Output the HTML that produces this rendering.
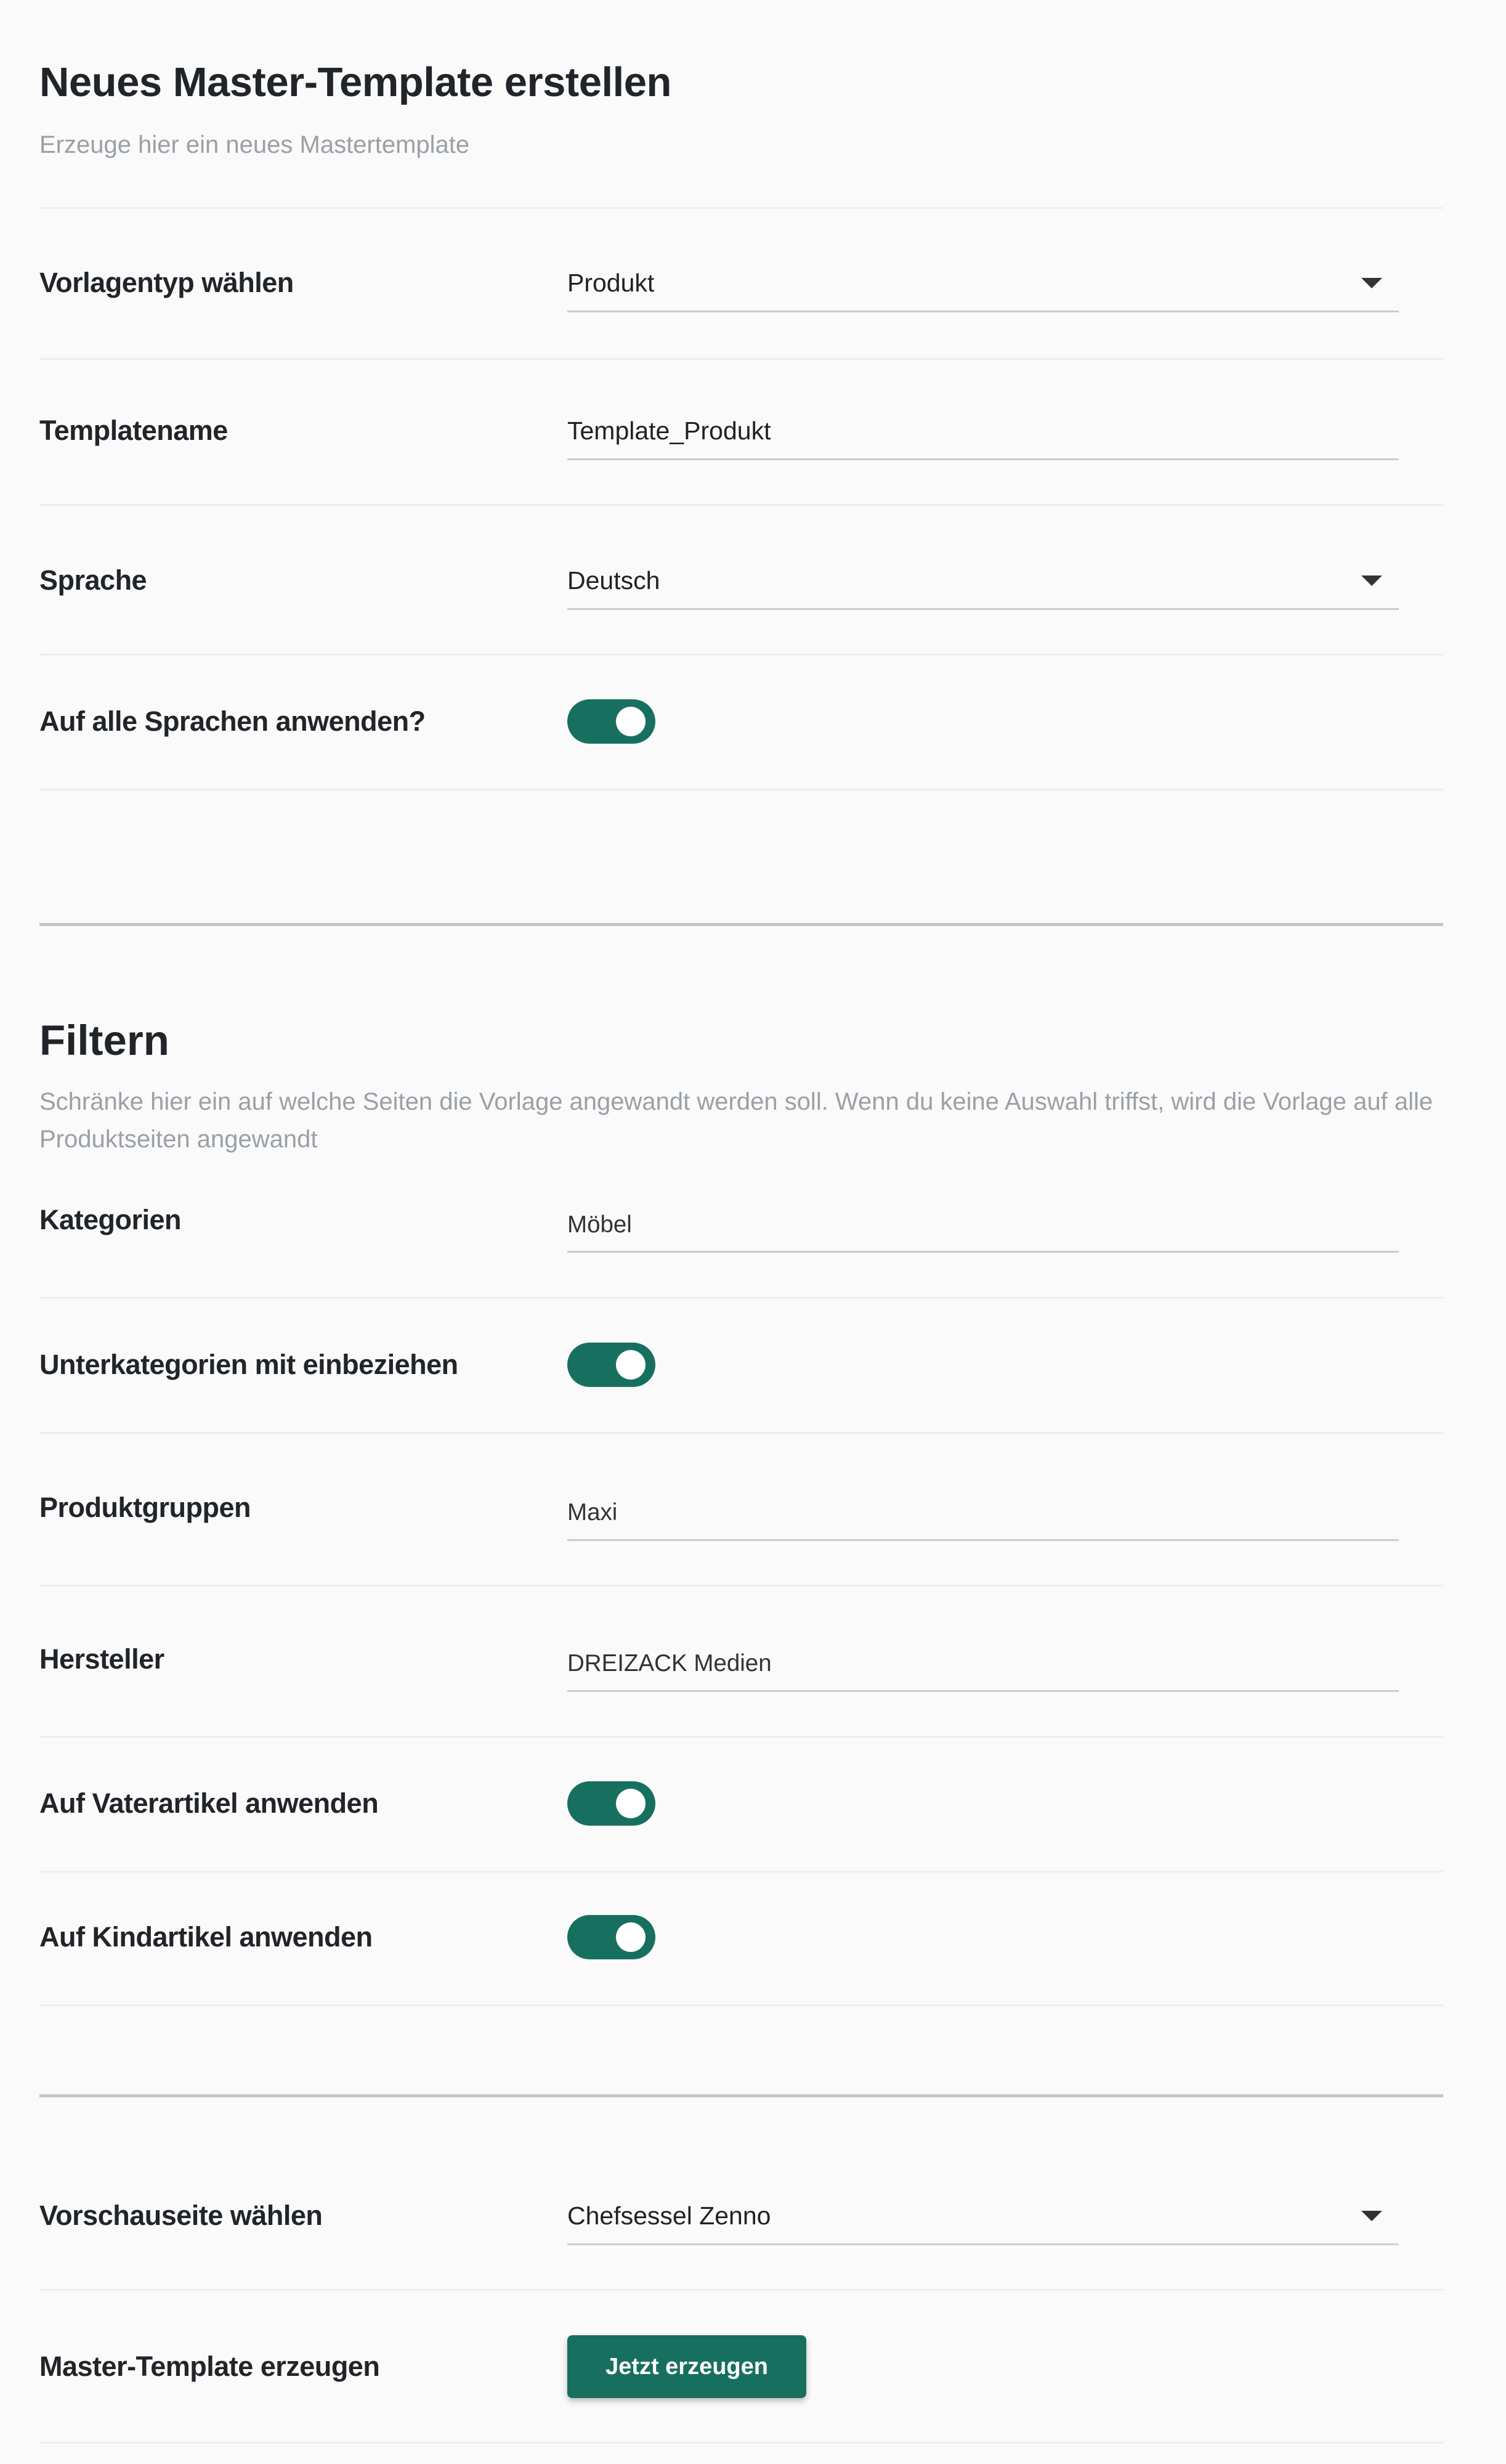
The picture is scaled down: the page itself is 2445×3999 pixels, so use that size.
<!DOCTYPE html>
<html><head><meta charset="utf-8"><style>
html,body{margin:0;padding:0;background:#fafafa;}
body{width:2445px;height:3999px;position:relative;overflow:hidden;font-family:"Liberation Sans",sans-serif;color:#212529;}
.a{position:absolute;white-space:nowrap;}
.lbl{position:absolute;left:64px;font-weight:bold;font-size:45px;line-height:50px;transform:translateY(-25px);letter-spacing:-0.5px;}
.hr{position:absolute;left:64px;width:2279px;height:3px;background:#eeeeee;}
.thk{position:absolute;left:64px;width:2279px;height:5px;background:#c4c6c6;}
.ul{position:absolute;left:921px;width:1350px;height:3px;background:#c8cccb;}
.inp{position:absolute;left:921px;font-size:41px;line-height:50px;transform:translateY(-25px);color:#222;}
.inp2{position:absolute;left:921px;font-size:38.5px;line-height:50px;transform:translateY(-25px);color:#333;}
.arr{position:absolute;left:2210px;width:0;height:0;border-left:17px solid transparent;border-right:17px solid transparent;border-top:17px solid #333;}
.tg{position:absolute;left:921px;width:143px;height:72px;border-radius:36px;background:#17705f;transform:translateY(-36px);}
.tg::after{content:"";position:absolute;right:16px;top:12px;width:48px;height:48px;border-radius:50%;background:#fff;}
</style></head><body>
<div class="a" style="left:64px;top:94px;font-size:67px;font-weight:bold;line-height:80px;letter-spacing:-0.5px">Neues Master-Template erstellen</div>
<div class="a" style="left:64px;top:211px;font-size:40px;line-height:48px;color:#9aa0a6">Erzeuge hier ein neues Mastertemplate</div>
<div class="hr" style="top:336px"></div>

<div class="lbl" style="top:459px">Vorlagentyp wählen</div>
<div class="inp" style="top:459px">Produkt</div>
<div class="arr" style="top:451px"></div>
<div class="ul" style="top:504px"></div>
<div class="hr" style="top:581px"></div>

<div class="lbl" style="top:699px">Templatename</div>
<div class="inp" style="top:699px">Template_Produkt</div>
<div class="ul" style="top:744px"></div>
<div class="hr" style="top:818px"></div>

<div class="lbl" style="top:942px">Sprache</div>
<div class="inp" style="top:942px">Deutsch</div>
<div class="arr" style="top:934px"></div>
<div class="ul" style="top:987px"></div>
<div class="hr" style="top:1061px"></div>

<div class="lbl" style="top:1171px">Auf alle Sprachen anwenden?</div>
<div class="tg" style="top:1171px"></div>
<div class="hr" style="top:1280px"></div>

<div class="thk" style="top:1498px"></div>

<div class="a" style="left:64px;top:1648px;font-size:69px;font-weight:bold;line-height:82px">Filtern</div>
<div class="a" style="left:64px;top:1758px;font-size:40px;line-height:61px;color:#9aa0a6">Schränke hier ein auf welche Seiten die Vorlage angewandt werden soll. Wenn du keine Auswahl triffst, wird die Vorlage auf alle<br>Produktseiten angewandt</div>

<div class="lbl" style="top:1980px">Kategorien</div>
<div class="inp2" style="top:1988px">Möbel</div>
<div class="ul" style="top:2030px"></div>
<div class="hr" style="top:2105px"></div>

<div class="lbl" style="top:2215px">Unterkategorien mit einbeziehen</div>
<div class="tg" style="top:2215px"></div>
<div class="hr" style="top:2324px"></div>

<div class="lbl" style="top:2447px">Produktgruppen</div>
<div class="inp2" style="top:2455px">Maxi</div>
<div class="ul" style="top:2498px"></div>
<div class="hr" style="top:2572px"></div>

<div class="lbl" style="top:2693px">Hersteller</div>
<div class="inp2" style="top:2700px">DREIZACK Medien</div>
<div class="ul" style="top:2743px"></div>
<div class="hr" style="top:2817px"></div>

<div class="lbl" style="top:2927px">Auf Vaterartikel anwenden</div>
<div class="tg" style="top:2927px"></div>
<div class="hr" style="top:3036px"></div>

<div class="lbl" style="top:3144px">Auf Kindartikel anwenden</div>
<div class="tg" style="top:3144px"></div>
<div class="hr" style="top:3253px"></div>

<div class="thk" style="top:3399px"></div>

<div class="lbl" style="top:3596px">Vorschauseite wählen</div>
<div class="inp" style="top:3596px">Chefsessel Zenno</div>
<div class="arr" style="top:3588px"></div>
<div class="ul" style="top:3641px;background:#c9d3cc"></div>
<div class="hr" style="top:3715px"></div>

<div class="lbl" style="top:3841px">Master-Template erzeugen</div>
<div class="a" style="left:921px;top:3790px;width:388px;height:102px;background:#17705f;border-radius:8px;box-shadow:0 5px 10px rgba(0,0,0,0.25);color:#fff;font-weight:bold;font-size:38px;line-height:102px;text-align:center">Jetzt erzeugen</div>
<div class="hr" style="top:3963px"></div>
</body></html>
